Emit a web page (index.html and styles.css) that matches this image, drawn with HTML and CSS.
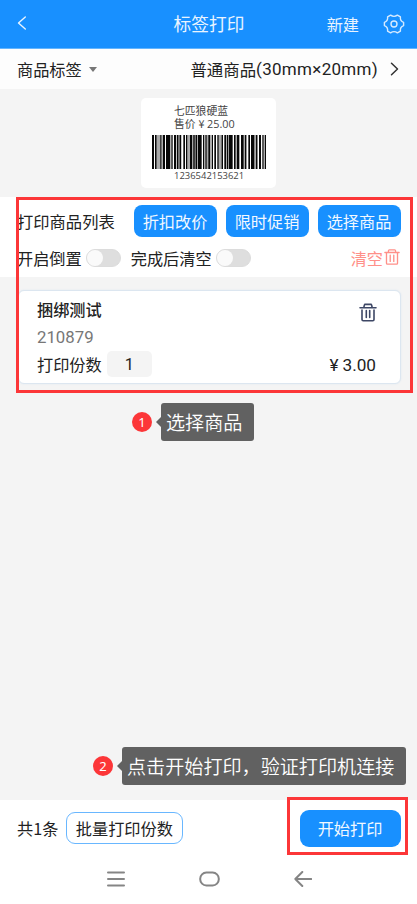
FILE: index.html
```html
<!DOCTYPE html>
<html lang="zh-CN">
<head>
<meta charset="utf-8">
<title>标签打印</title>
<link rel="stylesheet" href="styles.css">
</head>
<body>
<div class="screen">
  <header class="topbar">
    <svg class="back" width="10" height="14" viewBox="0 0 10 14"><path d="M8.3 1 1.5 7l6.8 6"/></svg>
    <h1>标签打印</h1>
    <div class="actions">
      <span>新建</span>
      <svg class="gear" width="22" height="22" viewBox="0 0 22 22"><path d="M7.6 2.1Q11 4.6 14.4 2.1L17.4 3.9Q16.9 8 20.6 9.4V12.6Q16.9 14 17.4 18.1L14.4 19.9Q11 17.4 7.6 19.9L4.6 18.1Q5.1 14 1.4 12.6V9.4Q5.1 8 4.6 3.9Z"/><circle cx="11" cy="11" r="3"/></svg>
    </div>
  </header>

  <div class="template">
    <div class="kind">商品标签<i class="caret"></i></div>
    <div class="size"><span>普通商品</span><span class="dims">(30mm×20mm)</span>
      <svg width="9" height="14" viewBox="0 0 9 14"><path d="m1.5 1.2 6 5.8-6 5.8"/></svg>
    </div>
  </div>

  <section class="preview">
    <div class="label">
      <p>七匹狼硬蓝</p>
      <p>售价<span class="yen">¥</span><span class="amount">25.00</span></p>
      <svg class="barcode" width="114" height="34" viewBox="66 0 342 34" preserveAspectRatio="none">
        <path class="tone" d="M81 0h15v34H81zM139 0h16v34h-16zM172 0h8v34h-8zM186 0h12v34h-12zM229 0h7v34h-7zM265 0h14v34h-14zM287 0h8v34h-8zM341 0h8v34h-8zM373 0h10v34h-10z"/>
        <path d="M66 0h6v34h-6zM75 0h5v34h-5zM91 0h3v34h-3zM98 0h7v34h-7zM108 0h13v34h-13zM124 0h4v34h-4zM132 0h6v34h-6zM141 0h4v34h-4zM149 0h4v34h-4zM160 0h5v34h-5zM168 0h4v34h-4zM180 0h6v34h-6zM190 0h4v34h-4zM197 0h4v34h-4zM203 0h12v34h-12zM219 0h4v34h-4zM226 0h4v34h-4zM235 0h6v34h-6zM245 0h4v34h-4zM253 0h5v34h-5zM262 0h4v34h-4zM275 0h4v34h-4zM283 0h5v34h-5zM291 0h4v34h-4zM297 0h11v34h-11zM312 0h5v34h-5zM320 0h8v34h-8zM333 0h8v34h-8zM345 0h4v34h-4zM355 0h5v34h-5zM363 0h10v34h-10zM378 0h4v34h-4zM387 0h6v34h-6zM397 0h4v34h-4zM404 0h4v34h-4z"/>
      </svg>
      <div class="code">1236542153621</div>
    </div>
  </section>

  <section class="tools">
    <div class="tool-row">
      <span class="heading">打印商品列表</span>
      <button>折扣改价</button><button>限时促销</button><button>选择商品</button>
    </div>
    <div class="switch-row">
      <span>开启倒置</span><i class="switch"></i>
      <span class="second">完成后清空</span><i class="switch"></i>
      <span class="clear">清空<svg width="16" height="18" viewBox="0 0 18 19"><path d="M1 4.4h16M5 4.2V2.4q0-1 1-1h6q1 0 1 1v1.8M2.8 4.6v12q0 1 1 1h10.4q1 0 1-1v-12M7 7.5v7M11 7.5v7"/></svg></span>
    </div>
  </section>

  <main class="list">
    <article class="item">
      <div class="line"><strong>捆绑测试</strong><svg class="trash" width="18" height="19" viewBox="0 0 18 19"><path d="M1 4.8h16M4.8 4.6 5.4 2q.1-.6.7-.6h5.8q.6 0 .7.6l.6 2.6M3 7v9.6q0 1.2 1.2 1.2h9.6q1.2 0 1.2-1.2V7M7.3 7.5v7M10.7 7.5v7"/></svg></div>
      <div class="sku">210879</div>
      <div class="line copies"><span>打印份数</span><span class="count">1</span><span class="price"><span class="sign">¥</span>3.00</span></div>
    </article>
  </main>

  <footer class="bottom">
    <span>共1条</span>
    <button class="batch">批量打印份数</button>
    <button class="start">开始打印</button>
  </footer>
  <nav class="system">
    <svg width="18" height="16" viewBox="0 0 18 16"><path d="M1 1.6h16M1 8h16M1 14.4h16"/></svg>
    <svg width="21" height="16" viewBox="0 0 21 16"><rect x="1.2" y="1.6" width="18.6" height="12.8" rx="6.2"/></svg>
    <svg width="18" height="16" viewBox="0 0 18 16"><path d="M8.3 1 1.3 8l7 7M1.3 8h16"/></svg>
  </nav>

  <div class="frame frame-list"></div>
  <div class="frame frame-start"></div>
  <div class="note note-one"><b>1</b><p>选择商品</p></div>
  <div class="note note-two"><b>2</b><p>点击开始打印，验证打印机连接</p></div>
</div>
</body>
</html>
```
FILE: styles.css
```css
* { box-sizing: border-box; }
body, h1, p { margin: 0; }
body {
  background: #f4f4f4;
  color: #222;
  font: 16.2px/24px "Noto Sans CJK SC", sans-serif;
}
svg { display: block; fill: none; stroke-linecap: round; stroke-linejoin: round; }
button {
  border: 0;
  padding: 0;
  color: #f2f8ff;
  background: #1890ff;
  font: inherit;
  white-space: nowrap;
}
.screen {
  position: relative;
  display: flex;
  flex-direction: column;
  width: 417px;
  height: 904px;
  overflow: hidden;
  white-space: nowrap;
}
.topbar {
  display: grid;
  grid-template-columns: 1fr auto 1fr;
  align-items: center;
  height: 49px;
  padding: 0 12px 2px 17px;
  color: #e9f4ff;
  background: #1890ff;
  border-bottom: 1px solid #63b5ff;
}
.topbar h1 { font-size: 17.7px; font-weight: 400; margin: 0 2px 0 -2px; }
.back { stroke: #e9f4ff; stroke-width: 1.4; }
.actions { display: flex; align-items: center; justify-content: flex-end; gap: 23px; padding-top: 1px; }
.actions span { margin-right: 1px; }
.gear { stroke: #d5eaff; stroke-width: 1.4; }
.template {
  display: flex;
  justify-content: space-between;
  align-items: center;
  height: 40px;
  padding: 0 18px 0 17px;
  background: #fdfdfd;
}
.kind, .size { display: flex; align-items: center; }
.caret {
  margin-left: 7px;
  border: 4.5px solid transparent;
  border-top: 5px solid #777;
  border-bottom: 0;
}
.size > span:first-child { font-size: 16.4px; }
.dims { font-family: Roboto, sans-serif; font-size: 17px; letter-spacing: .3px; }
.size svg { margin-left: 12px; stroke: #333; stroke-width: 1.5; }
.preview { height: 108px; padding-top: 9px; }
.label {
  width: 135px;
  height: 90px;
  margin: 0 auto;
  padding: 6px 10px 0 11px;
  position: relative;
  border-radius: 5px;
  background: #fff;
  color: #444;
  font-size: 10.8px;
  line-height: 13px;
}
.label p { padding-left: 22px; height: 13px; }
.yen { margin: 0 2.5px 0 3px; }
.amount { font-family: "Open Sans", sans-serif; font-size: 10.8px; line-height: 12px; }
.barcode { margin-top: 5px; fill: #080808; }
.barcode .tone { fill: #aaa; }
.code { padding-left: 22px; font: 9.45px/14px "Open Sans", sans-serif; }
.tools { height: 80px; padding: 8px 16px 0 17px; background: #fff; }
.tool-row { display: flex; gap: 9px; align-items: center; height: 32px; }
.heading { flex: 1; font-size: 16.3px; }
.tool-row button { width: 83px; height: 32px; padding-right: 1px; border-radius: 8px; }
.switch-row { display: flex; align-items: center; height: 24px; margin-top: 9px; }
.switch {
  width: 35px;
  height: 18px;
  margin-left: 4px;
  border: 1px solid #dcdcdc;
  border-radius: 9px;
  background: #dedede;
}
.switch::before { content: ""; display: block; width: 16px; height: 16px; border-radius: 50%; background: #fafafa; }
.second { margin-left: 10px; }
.clear { display: flex; align-items: center; margin-left: auto; margin-right: 1px; color: #ff9089; }
.clear svg { margin-left: 1px; margin-top: -2px; stroke: #ff9089; stroke-width: 1.5; }
.list { flex: 1; padding: 13px 16px 0 18px; }
.item {
  height: 94px;
  padding: 5px 23px 0 18px;
  border: 1px solid #dce6f0;
  border-radius: 6px;
  background: #fff;
  box-shadow: 0 0 2px #dce6f0;
}
.line { display: flex; align-items: center; height: 26px; }
.line strong { font-weight: 500; }
.trash { margin-left: auto; margin-top: 7px; stroke: #3d4765; stroke-width: 1.6; }
.sku { height: 28px; line-height: 30px; font-family: Roboto, sans-serif; font-size: 16.8px; color: #777; }
.copies { height: 28px; }
.count { width: 45px; height: 26px; margin-left: 5px; border-radius: 5px; background: #f4f4f4; text-align: center; font-family: Roboto, sans-serif; line-height: 28px; }
.price { margin-left: auto; margin-right: 1px; padding-top: 1px; font-family: Roboto, sans-serif; font-size: 17.2px; }
.sign { margin-right: 4px; }
.bottom {
  display: flex;
  align-items: center;
  height: 56px;
  padding: 0 16px 0 17px;
  background: #fff;
}
.batch { width: 117px; height: 32px; margin-left: 8px; padding-right: 1px; border: 1px solid #69b7ff; border-radius: 9px; background: #fff; color: #222; }
.start { width: 101px; height: 37px; margin-left: auto; padding-right: 1px; border-radius: 9px; }
.system {
  display: flex;
  justify-content: center;
  gap: 74px;
  height: 48px;
  padding: 15px 0 0 1px;
  background: #fff;
}
.system svg { stroke: #858585; stroke-width: 2; }
.frame { position: absolute; border: 3px solid #fc3638; }
.frame-list { left: 16px; top: 197px; width: 397px; height: 196px; }
.frame-start { left: 287px; top: 797px; width: 121px; height: 58px; }
.note { position: absolute; display: flex; align-items: center; gap: 9px; }
.note-one { left: 132px; top: 403px; }
.note-two { left: 93px; top: 747px; }
.note b {
  width: 20px;
  height: 20px;
  border-radius: 50%;
  background: #fc3638;
  color: #fff;
  font: 13px/20px "Noto Sans", sans-serif;
  text-align: center;
}
.note p {
  position: relative;
  height: 38px;
  padding: 0 12px 0 5px;
  border-radius: 3px;
  background: #616161;
  color: #fff;
  font-size: 19.1px;
  font-weight: 350;
  line-height: 38px;
}
.note p::before {
  content: "";
  position: absolute;
  left: -5px;
  top: 14px;
  border: 5px solid transparent;
  border-right-color: #616161;
  border-left: 0;
}
```
